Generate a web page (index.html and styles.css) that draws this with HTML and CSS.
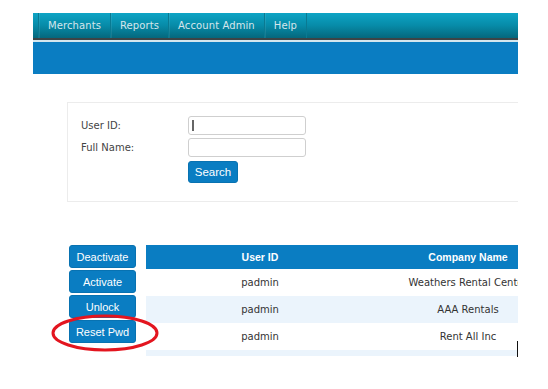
FILE: index.html
```html
<!DOCTYPE html>
<html>
<head>
<meta charset="utf-8">
<link rel="stylesheet" href="styles.css">
</head>
<body>
<div class="page">
  <nav class="topnav">
    <a class="nav-item">Merchants</a>
    <a class="nav-item">Reports</a>
    <a class="nav-item">Account Admin</a>
    <a class="nav-item">Help</a>
  </nav>
  <div class="rule-dark"></div>
  <div class="rule-light"></div>
  <div class="band"></div>

  <section class="search">
    <div class="form-grid">
      <label class="lbl">User ID:</label>
      <span class="field caret"><input class="txt" type="text"></span>
      <label class="lbl">Full Name:</label>
      <span class="field"><input class="txt" type="text"></span>
      <span></span>
      <span><button class="btn btn-search">Search</button></span>
    </div>
  </section>

  <section class="results">
    <div class="actions">
      <button class="btn btn-act">Deactivate</button>
      <button class="btn btn-act">Activate</button>
      <button class="btn btn-act">Unlock</button>
      <button class="btn btn-act">Reset Pwd</button>
    </div>
    <div class="table-wrap">
      <table class="grid">
        <thead>
          <tr><th class="c1">User ID</th><th class="c2">Company Name</th></tr>
        </thead>
        <tbody>
          <tr><td>padmin</td><td>Weathers Rental Center</td></tr>
          <tr class="alt"><td>padmin</td><td>AAA Rentals</td></tr>
          <tr><td>padmin</td><td>Rent All Inc</td></tr>
          <tr class="alt"><td></td><td></td></tr>
        </tbody>
      </table>
    </div>
    <svg class="circle" width="110" height="40" viewBox="0 0 110 40">
      <ellipse cx="55" cy="20" rx="52" ry="17" fill="none" stroke="#e3151f" stroke-width="3"/>
    </svg>
  </section>
  <span class="cursor-mark"></span>
</div>
</body>
</html>
```

FILE: styles.css
```css
* { box-sizing: border-box; }
html, body { margin: 0; padding: 0; background: #fff; }
body { font-family: "DejaVu Sans", Verdana, sans-serif; }

.page {
  position: relative;
  margin: 13px 0 0 33px;
  width: 485px;
  height: 376px;
  overflow: hidden;
}

.topnav {
  display: flex;
  height: 25px;
  padding-left: 5px;
  background: linear-gradient(to bottom, #0ea4c5 0%, #078ba8 50%, #05677c 100%);
}
.nav-item {
  display: flex;
  align-items: center;
  padding: 0 9px 1px 9px;
  font-size: 10px;
  letter-spacing: 0.1px;
  color: #d5e6ec;
  border-left: 1px solid #0a7a92;
  box-shadow: inset 1px 0 0 rgba(255,255,255,0.08);
}
.nav-item:last-child { border-right: 1px solid #0a7a92; }

.rule-dark { height: 2px; background: #3d4446; }
.rule-light { height: 2px; background: #d4e6ee; }
.band { height: 32px; background: #0a7dc2; }

.search {
  margin: 28px 0 0 34px;
  width: 520px;
  height: 100px;
  border: 1px solid #ececec;
  padding: 13px 13px;
}
.form-grid {
  display: grid;
  grid-template-columns: 107px 118px;
  grid-auto-rows: auto;
  row-gap: 3px;
  align-items: center;
}
.lbl { font-size: 10px; color: #444; }
.field { position: relative; display: block; height: 19px; }
.txt {
  display: block;
  width: 118px;
  height: 19px;
  margin: 0;
  padding: 0 4px;
  border: 1px solid #cfcfcf;
  border-radius: 3px;
  background: #fff;
  outline: none;
}
.caret::after {
  content: "";
  position: absolute;
  left: 4px;
  top: 4px;
  width: 1.5px;
  height: 11px;
  background: #666;
}

.btn {
  font-family: "Liberation Sans", Arial, sans-serif;
  font-size: 11px;
  color: #fff;
  background: #0a7dc2;
  border: 1px solid #0872b1;
  border-radius: 3px;
  padding: 0;
  margin: 0;
}
.btn-search {
  display: block;
  margin-top: 1px;
  width: 50px;
  height: 22px;
  font-size: 11.5px;
}

.results {
  position: relative;
  display: flex;
  gap: 10px;
  margin: 43px 0 0 36px;
}
.actions {
  display: flex;
  flex-direction: column;
  gap: 2px;
  width: 67px;
  flex: none;
}
.btn-act { height: 23px; width: 67px; font-size: 11px; }

.table-wrap {
  flex: none;
  width: 416px;
  height: 111px;
  overflow: hidden;
}
.grid {
  border-collapse: collapse;
  width: 416px;
  table-layout: fixed;
}
.grid th {
  height: 24px;
  background: #0a7dc2;
  color: #fff;
  font-family: "Liberation Sans", Arial, sans-serif;
  font-weight: bold;
  font-size: 10.5px;
  text-align: center;
  padding: 0;
}
.grid th.c1 { width: 228px; }
.grid th.c2 { width: 188px; }
.grid td {
  height: 27px;
  padding: 0;
  text-align: center;
  font-size: 10px;
  color: #333;
  white-space: nowrap;
  overflow: hidden;
}
.grid tr.alt td { background: #ebf4fc; }

.circle {
  position: absolute;
  left: -19px;
  top: 68px;
}
.cursor-mark {
  position: absolute;
  left: 484px;
  top: 328px;
  width: 1.5px;
  height: 16px;
  background: #111;
}
```
